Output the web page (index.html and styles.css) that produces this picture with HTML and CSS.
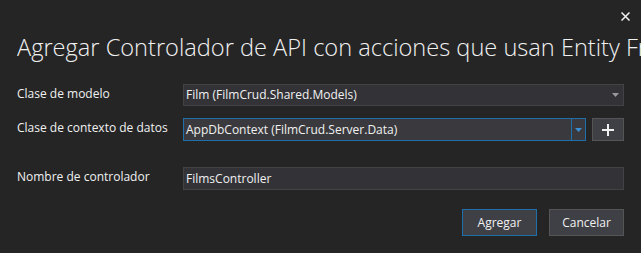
FILE: index.html
```html
<!DOCTYPE html>
<html lang="es">
<head>
<meta charset="utf-8">
<title>Agregar Controlador</title>
<link rel="stylesheet" href="styles.css">
</head>
<body>
<div class="dialog">
  <div class="topbar">
    <button class="close" aria-label="Cerrar">
      <svg width="9" height="9" viewBox="0 0 9 9"><path d="M0.5 0.5 L8.5 8.5 M8.5 0.5 L0.5 8.5" stroke="#f1f1f1" stroke-width="1.5"/></svg>
    </button>
  </div>
  <h1 class="title">Agregar Controlador de API con acciones que usan Entity Framework</h1>
  <div class="form">
    <label class="label">Clase de modelo</label>
    <div class="field">
      <div class="combo">
        <span class="combo-text">Film (FilmCrud.Shared.Models)</span>
        <span class="combo-arrow"><svg width="7" height="4" viewBox="0 0 7 4"><path d="M0 0 H7 L3.5 4 Z" fill="#999999"/></svg></span>
      </div>
    </div>

    <label class="label">Clase de contexto de datos</label>
    <div class="field">
      <div class="combo focused">
        <span class="combo-text">AppDbContext (FilmCrud.Server.Data)</span>
        <span class="combo-arrow sep"><svg width="7" height="4" viewBox="0 0 7 4"><path d="M0 0 H7 L3.5 4 Z" fill="#3c8fd0"/></svg></span>
      </div>
      <button class="plus" aria-label="Agregar">
        <svg width="12" height="12" viewBox="0 0 12 12"><path d="M6 0 V12 M0 6 H12" stroke="#f1f1f1" stroke-width="2"/></svg>
      </button>
    </div>

    <label class="label name-label">Nombre de controlador</label>
    <div class="field name-field">
      <div class="textbox">FilmsController</div>
    </div>
  </div>
  <div class="actions">
    <button class="btn primary">Agregar</button>
    <button class="btn">Cancelar</button>
  </div>
</div>
</body>
</html>
```
FILE: styles.css
```css
html, body {
  margin: 0;
  padding: 0;
  background: #252526;
  width: 641px;
  height: 253px;
  overflow: hidden;
}
.dialog {
  font-family: "Open Sans", "Noto Sans", sans-serif;
  color: #f1f1f1;
  padding: 0 17px 0 17px;
}
.topbar {
  display: flex;
  justify-content: flex-end;
  height: 30px;
  padding-top: 12px;
  box-sizing: border-box;
  margin-right: -6px;
}
.close {
  background: none;
  border: 0;
  padding: 0;
  width: 9px;
  height: 9px;
  display: block;
}
.close svg { display: block; }
.title {
  margin: 0 -17px 0 0;
  font-size: 23.6px;
  font-weight: 300;
  line-height: 34px;
  white-space: nowrap;
  overflow: hidden;
  color: #f1f1f1;
}
.form {
  display: grid;
  grid-template-columns: 166px 1fr;
  row-gap: 12px;
  margin-top: 20px;
  font-size: 12px;
}
.label {
  line-height: 16px;
  padding-top: 2px;
}
.field {
  display: flex;
  gap: 6px;
}
.combo {
  flex: 1;
  height: 22px;
  box-sizing: border-box;
  background: #333337;
  border: 1px solid #434346;
  display: flex;
  align-items: center;
}
.combo.focused {
  height: 23px;
  border-color: #1f6fab;
  background: #3a3a3e;
}
.combo-text {
  flex: 1;
  padding-left: 2px;
  line-height: 20px;
}
.combo-arrow {
  width: 13px;
  height: 100%;
  display: flex;
  align-items: center;
  justify-content: center;
  margin-right: 1px;
}
.combo-arrow.sep {
  border-left: 1px solid #1f6fab;
  margin-right: 0;
}
.plus {
  width: 32px;
  height: 23px;
  box-sizing: border-box;
  background: #3f3f46;
  border: 1px solid #555555;
  padding: 0;
  display: flex;
  align-items: center;
  justify-content: center;
}
.name-label, .name-field { margin-top: 14px; }
.textbox {
  flex: 1;
  height: 23px;
  box-sizing: border-box;
  background: #333337;
  border: 1px solid #434346;
  padding-left: 2px;
  line-height: 21px;
}
.actions {
  display: flex;
  justify-content: flex-end;
  gap: 12px;
  margin-top: 19px;
}
.btn {
  width: 75px;
  height: 27px;
  box-sizing: border-box;
  background: #3f3f46;
  border: 1px solid #555555;
  color: #f1f1f1;
  font-family: "Open Sans", "Noto Sans", sans-serif;
  font-size: 12px;
  padding: 0;
}
.btn.primary {
  border-color: #1f6fab;
}
```
